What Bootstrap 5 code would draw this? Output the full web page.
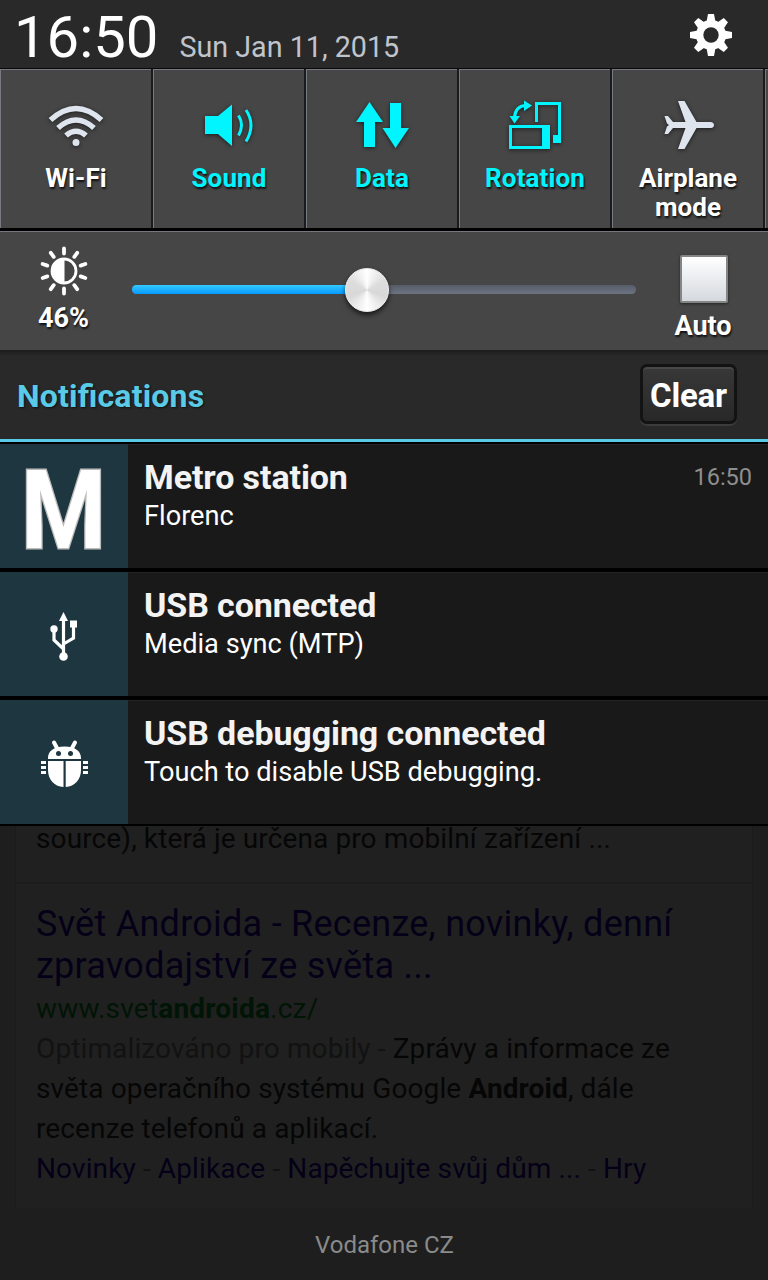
<!DOCTYPE html>
<html lang="en">
<head>
<meta charset="utf-8">
<meta name="viewport" content="width=device-width, initial-scale=1">
<title>Notification shade</title>
<link href="https://cdn.jsdelivr.net/npm/bootstrap@5.3.0/dist/css/bootstrap.min.css" rel="stylesheet">
<style>
body{font-family:Roboto,sans-serif;background:#1e1e1e;color:#fff;width:768px;height:1280px;overflow:hidden}
.t{white-space:nowrap;line-height:1}
.status{height:69px;background:#292929;border-bottom:1px solid #080808}
.clock{font-size:58px;margin:8px 0 0 14px}
.date{font-size:28.700px;margin:33px 0 0 21px;color:#c0c4cc}
.gear{margin:12px 34px 0 auto}
.tiles{height:162px;background:#1a1b1d;border-bottom:3px solid #000}
.tile{width:151px;margin-right:2px;flex:none;background:#464646;border:solid #777a82;border-width:1px 0 0 1px;font-size:26px;font-weight:700;letter-spacing:.1px;line-height:29px;text-shadow:1px 2px 2px #111;padding-top:24px}
.tile svg{filter:drop-shadow(0 1px 2px rgba(0,0,0,.6))}
.tile div{margin-top:11px}
.tile .two{margin-top:10px;letter-spacing:0}
.on{color:#00f5ff}
.bright{height:119px;background:#464646;border-top:1px solid #77757d}
.lvl{width:126px;padding:12px 0 0 2px;font-size:27px;font-weight:700;text-shadow:1px 2px 2px #111}
.lvl div{margin:7px 1px 0 0}
.track{width:504px;height:9px;flex:none;border-radius:5px;background:linear-gradient(#565c68,#6d7482);margin:53px 0 0 6px}
.track .fillbar{height:9px;border-radius:5px;background:linear-gradient(#33c9ff,#0799ff)}
.knob{width:44px;height:44px;border-radius:50%;top:-17px;box-shadow:0 3px 5px rgba(0,0,0,.65);background:conic-gradient(#fff,#ddd 60deg,#d8d8d8 110deg,#fff 180deg,#d8d8d8 250deg,#ddd 300deg,#fff);border:1px solid #eee}
.auto{width:132px;flex:none;padding:23px 0 0 3px;font-size:27px;font-weight:700;text-shadow:1px 2px 2px #111}
.auto .t{margin:10px 1px 0 0}
.box{width:48px;height:48px;border:2px solid #858585;border-radius:2px;background:linear-gradient(#fff,#d5d9de);box-shadow:0 1px 3px rgba(0,0,0,.5)}
.head{height:94px;background:linear-gradient(#1c1c1c,#292929 6px);border-bottom:2px solid #000;box-shadow:inset 0 -3px #5acbe6}
.head .ttl{font-size:32px;font-weight:700;letter-spacing:.2px;font-variant-ligatures:common-ligatures;color:#5acbe6;margin:30px 0 0 17px;text-shadow:1px 1px 2px #111}
.clr{width:97px;height:60px;border:3px solid #131313;border-radius:7px;background:linear-gradient(#383838,#282828);box-shadow:0 2px #3b3b3b,inset 0 2px #484848;font-size:33px;font-weight:700;letter-spacing:-.2px;margin:14px 31px 0 auto;padding:2px 0 0}
.note{height:128px;border-bottom:4px solid #000;background:#191919;box-shadow:inset 0 1px #252525}
.note.end{height:126px;border-bottom-width:2px}
.ico{width:128px;background:#1e3640;flex:none}
.note h2{font-size:34px;font-weight:700;letter-spacing:-.1px;color:#f3f3f3;margin:16px 0 0}
.note p{font-size:27.200px;margin:9px 0 0}
.time{font-size:23.500px;color:#8e8e8e;margin:22px 16px 0 auto}
.big-m{fill:#fff;stroke:#bbb;stroke-width:3px;paint-order:stroke;font:700 109px Roboto,sans-serif}
.page{width:738px;height:382px;margin-left:15px;background:#202020;border:solid #1b1b1b;border-width:0 1px;color:#060606;font-size:28px;line-height:40px;letter-spacing:.12px;white-space:nowrap}
.page>div{padding-left:20px}
.sep{height:58px;border-bottom:2px solid #1c1c1c;margin-bottom:19px}
.sep span{position:relative;top:-7px}
.lnk{color:#050018}
.lk1{font-size:36px;line-height:42px;letter-spacing:.26px}
.url{color:#001505;height:42px;line-height:44px;letter-spacing:.2px}
.dim{color:#121212}
.carrier{font-size:24px;color:#8a8a8a;margin-top:25px;padding-left:1px;text-align:center}
</style>
</head>
<body>
<header class="status d-flex">
  <div class="t clock"><span>16:50</span></div>
  <div class="t date"><span>Sun Jan 11, 2015</span></div>
  <svg class="gear" width="46" height="46" viewBox="-23 -23 46 46">
    <g fill="#fff"><circle r="15"/>
    <g id="g"><path id="k" d="M-4.500-13L-3-21H3L4.500-13V13L3 21H-3L-4.500 13Z"/><use href="#k" transform="rotate(45)"/><use href="#k" transform="rotate(90)"/><use href="#k" transform="rotate(135)"/></g></g>
    <circle r="7.700" fill="#292929"/>
  </svg>
</header>
<nav class="tiles d-flex overflow-hidden">
  <div class="tile text-center"><svg width="62" height="60" viewBox="0 0 62 60" fill="none" stroke="#dfe5ef" stroke-width="5.500"><path d="M5.500 26Q31 3 56.500 26M13 34Q31 18 49 34M21 41.500Q31 33 41 41.500"/><circle cx="31" cy="48.500" r="3.500" fill="#dfe5ef" stroke="none"/></svg><div class="t"><span>Wi-Fi</span></div></div>
  <div class="tile text-center on"><svg width="62" height="60" viewBox="0 0 62 60" fill="#00f5ff"><path d="M7 22H20L34 10.500V52L20 40H7Z"/><path d="M40.500 21.500Q46.500 31 40.500 41.500M48 16Q58 31 48 47.500" fill="none" stroke="#00f5ff" stroke-width="3"/></svg><div class="t"><span>Sound</span></div></div>
  <div class="tile text-center on"><svg width="62" height="60" viewBox="0 0 62 60" fill="#00f5ff"><path d="M18.500 8L32 28H24V53H13V28H5ZM39 9H50V34H58L44.500 54L31.500 34H39Z"/></svg><div class="t"><span>Data</span></div></div>
  <div class="tile text-center on"><svg width="62" height="60" viewBox="0 0 62 60" fill="#00f5ff"><path d="M5 31H46V55H5ZM8 34V52H38V34Z" fill-rule="evenodd"/><path d="M31 8H57V49H49V41H54V11H34V28H31Z"/><path d="M10.500 24Q11 12 22 11.500" fill="none" stroke="#00f5ff" stroke-width="3"/><path d="M20 6.500L28 11.500L20 17ZM5.500 22H16L10.500 29.500Z"/></svg><div class="t"><span>Rotation</span></div></div>
  <div class="tile text-center"><svg width="62" height="60" viewBox="0 0 62 60" fill="#dfe5ef"><path d="M21 7H27.500L39.500 28H54Q57 28.500 57 31Q57 33.500 54 34H39.500L27.500 55H21L28.500 34H16L11 40H7.500L10 32.500L12 31L10 29.500L7.500 22H11L16 28H28.500Z"/></svg><div class="two">Airplane<br>mode</div></div>
  <div class="tile"></div>
</nav>
<section class="bright d-flex">
  <div class="lvl text-center"><svg width="54" height="54" viewBox="-27 -27 54 54"><g stroke="#fff" stroke-width="3.800" stroke-linecap="round"><g id="r"><path id="a" d="M0-22.500V-17.500M0 22.500V17.500"/><use href="#a" transform="rotate(36)"/><use href="#a" transform="rotate(72)"/><use href="#a" transform="rotate(108)"/><use href="#a" transform="rotate(144)"/></g></g><circle r="12" fill="none" stroke="#fff" stroke-width="2.800"/><path d="M.5-12A12 12 0 0 0 .5 12Z" fill="#fff"/></svg><div class="t"><span>46%</span></div></div>
  <div class="track position-relative"><div class="fillbar" style="width:46%"></div><div class="knob position-absolute" style="left:213px"></div></div>
  <div class="auto d-flex flex-column align-items-center"><div class="box"></div><div class="t"><span>Auto</span></div></div>
</section>
<section class="head d-flex">
  <div class="t ttl"><span>Notiﬁcations</span></div>
  <button class="clr text-white t"><span>Clear</span></button>
</section>
<main>
  <article class="note d-flex"><div class="ico"><svg class="overflow-visible" width="128" height="124" viewBox="0 0 128 124"><text class="big-m" x="63.500" y="103.500" text-anchor="middle" textLength="85" lengthAdjust="spacingAndGlyphs">M</text></svg></div><div class="ps-3"><h2 class="t"><span>Metro station</span></h2><p class="t"><span>Florenc</span></p></div><div class="t time"><span>16:50</span></div></article>
  <article class="note d-flex"><div class="ico"><svg width="128" height="124" viewBox="0 0 128 124" fill="#fff"><path d="M63.500 40L68 49H59Z"/><path d="M63.500 48V84M54 58V68L63.500 77M73.500 54V66L63.500 72" fill="none" stroke="#fff" stroke-width="3.200"/><circle cx="54" cy="57" r="3.700"/><path d="M70 48.500H77V55.500H70Z"/><circle cx="63.500" cy="84.500" r="4.300"/></svg></div><div class="ps-3"><h2 class="t"><span>USB connected</span></h2><p class="t"><span>Media sync (MTP)</span></p></div></article>
  <article class="note end d-flex"><div class="ico"><svg width="128" height="124" viewBox="0 0 128 124" fill="#fff"><path d="M48 58C48 51 54 46.500 64.500 46.500S81 51 81 58V59H48ZM48 61H63.500V87C54 86.500 48 79 48 70ZM65.700 61H81V70C81 79 75 86.500 65.700 87Z"/><path d="M54 42.500L57.500 49M75 42.500L71.500 49" stroke="#fff" stroke-width="4" stroke-linecap="round"/><g fill="#1e3640"><circle cx="58.500" cy="53.500" r="2.500"/><circle cx="70.500" cy="53.500" r="2.500"/></g><path d="M41 61H46V64H41ZM41 66H46V69H41ZM41 71H46V74H41ZM83 61H88V64H83ZM83 66H88V69H83ZM83 71H88V74H83Z"/></svg></div><div class="ps-3"><h2 class="t"><span>USB debugging connected</span></h2><p class="t"><span>Touch to disable USB debugging.</span></p></div></article>
</main>
<section class="page">
  <div class="sep"><span>source), která je určena pro mobilní zařízení ...</span></div>
  <div class="lnk lk1"><span>Svět Androida - Recenze, novinky, denní</span></div>
  <div class="lnk lk1"><span>zpravodajství ze světa ...</span></div>
  <div class="url"><span>www.svet<b>androida</b>.cz/</span></div>
  <div><span><span class="dim">Optimalizováno pro mobily - </span>Zprávy a informace ze</span></div>
  <div><span>světa operačního systému Google <b>Android</b>, dále</span></div>
  <div><span>recenze telefonů a aplikací.</span></div>
  <div class="lnk"><span>Novinky <i class="dim fst-normal">-</i> Aplikace <i class="dim fst-normal">-</i> Napěchujte svůj dům ... <i class="dim fst-normal">-</i> Hry</span></div>
</section>
<footer class="carrier t"><span>Vodafone CZ</span></footer>
<script src="https://cdn.jsdelivr.net/npm/bootstrap@5.3.0/dist/js/bootstrap.bundle.min.js"></script>
</body>
</html>
